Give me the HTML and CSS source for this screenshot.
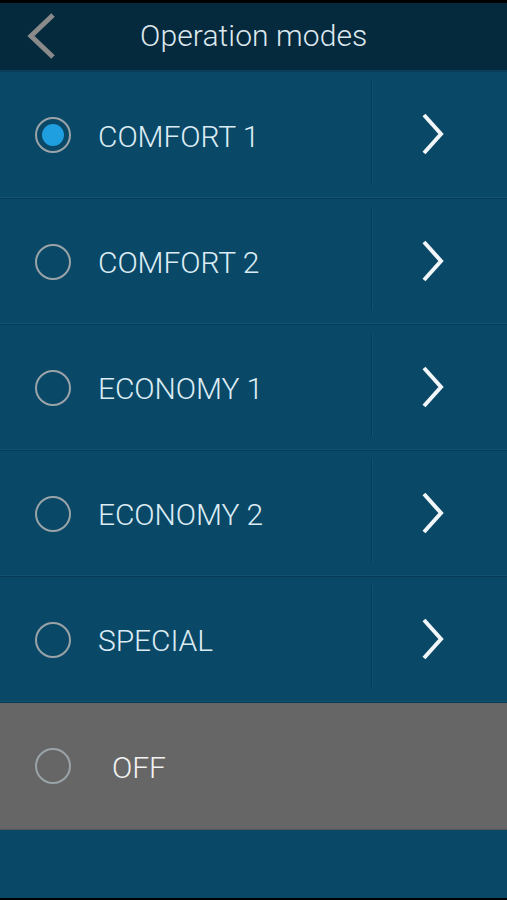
FILE: index.html
```html
<!DOCTYPE html>
<html lang="en">
<head>
  <meta charset="UTF-8">
  <meta name="viewport" content="width=device-width, initial-scale=1.0">
  <title>Operation modes</title>
  <link rel="stylesheet" href="styles.css">
</head>
<body>
  <div class="screen">
    <div class="header">
      <button class="back" type="button" aria-label="Back">
        <svg width="34" height="48" viewBox="0 0 34 48">
          <polyline points="28,3 6,24 28,45" fill="none" stroke="#8a8a8a" stroke-width="5"/>
        </svg>
      </button>
      <h1>Operation modes</h1>
    </div>

    <div class="modes">
      <div class="mode">
        <span class="radio checked"></span>
        <span class="label">COMFORT 1</span>
        <span class="more"><svg width="30" height="44" viewBox="0 0 30 44"><polyline points="5,3 22,22 5,41" fill="none" stroke="#f2f6f8" stroke-width="4"/></svg></span>
      </div>
      <div class="mode">
        <span class="radio"></span>
        <span class="label">COMFORT 2</span>
        <span class="more"><svg width="30" height="44" viewBox="0 0 30 44"><polyline points="5,3 22,22 5,41" fill="none" stroke="#f2f6f8" stroke-width="4"/></svg></span>
      </div>
      <div class="mode">
        <span class="radio"></span>
        <span class="label">ECONOMY 1</span>
        <span class="more"><svg width="30" height="44" viewBox="0 0 30 44"><polyline points="5,3 22,22 5,41" fill="none" stroke="#f2f6f8" stroke-width="4"/></svg></span>
      </div>
      <div class="mode">
        <span class="radio"></span>
        <span class="label">ECONOMY 2</span>
        <span class="more"><svg width="30" height="44" viewBox="0 0 30 44"><polyline points="5,3 22,22 5,41" fill="none" stroke="#f2f6f8" stroke-width="4"/></svg></span>
      </div>
      <div class="mode">
        <span class="radio"></span>
        <span class="label">SPECIAL</span>
        <span class="more"><svg width="30" height="44" viewBox="0 0 30 44"><polyline points="5,3 22,22 5,41" fill="none" stroke="#f2f6f8" stroke-width="4"/></svg></span>
      </div>
      <div class="mode off">
        <span class="radio"></span>
        <span class="label">OFF</span>
      </div>
    </div>
  </div>
</body>
</html>
```

FILE: styles.css
```css
* {
  box-sizing: border-box;
}
body {
  margin: 0;
  background: #000;
  font-family: Roboto, "Noto Sans", sans-serif;
}
.screen {
  width: 507px;
  height: 900px;
  padding: 3px 0 2px;
  background: #000;
  display: flex;
  flex-direction: column;
}
.header {
  height: 69px;
  background: #05293d;
  border-bottom: 2px solid #0a3d58;
  display: flex;
  align-items: center;
}
.back {
  background: none;
  border: none;
  padding: 0;
  margin-left: 25px;
  margin-top: -2px;
  display: flex;
}
h1 {
  margin: -3px 0 0 81px;
  font-size: 30px;
  font-weight: 300;
  color: #dde8ee;
  letter-spacing: 0.1px;
}
.modes {
  flex: 1;
  background: #0a4867;
}
.mode {
  height: 126px;
  display: flex;
  align-items: center;
  border-bottom: 1px solid #073a54;
  box-shadow: inset 0 -1px 0 #0f5272;
  color: #dcecf4;
}
.mode:first-child {
  height: 127px;
}
.radio {
  width: 36px;
  height: 36px;
  margin-left: 35px;
  margin-right: 27px;
  border: 2px solid #9aa3a8;
  border-radius: 50%;
  display: flex;
  align-items: center;
  justify-content: center;
}
.radio.checked::after {
  content: "";
  width: 22px;
  height: 22px;
  border-radius: 50%;
  background: #1f9ee0;
}
.label {
  flex: 1;
  font-size: 30px;
  font-weight: 300;
  letter-spacing: -0.1px;
  margin-top: 2px;
}
.more {
  width: 136px;
  align-self: stretch;
  margin: 8px 0 14px;
  border-left: 1px solid #073a54;
  box-shadow: inset 1px 0 0 #0f5272;
  display: flex;
  align-items: center;
  justify-content: center;
  padding-right: 12px;
  padding-top: 4px;
}
.mode.off {
  height: 127px;
  background: #666;
  border-bottom: 1px solid #555;
  box-shadow: none;
}
.mode.off .label {
  margin-left: 14px;
  color: #f2f2f2;
}
```
